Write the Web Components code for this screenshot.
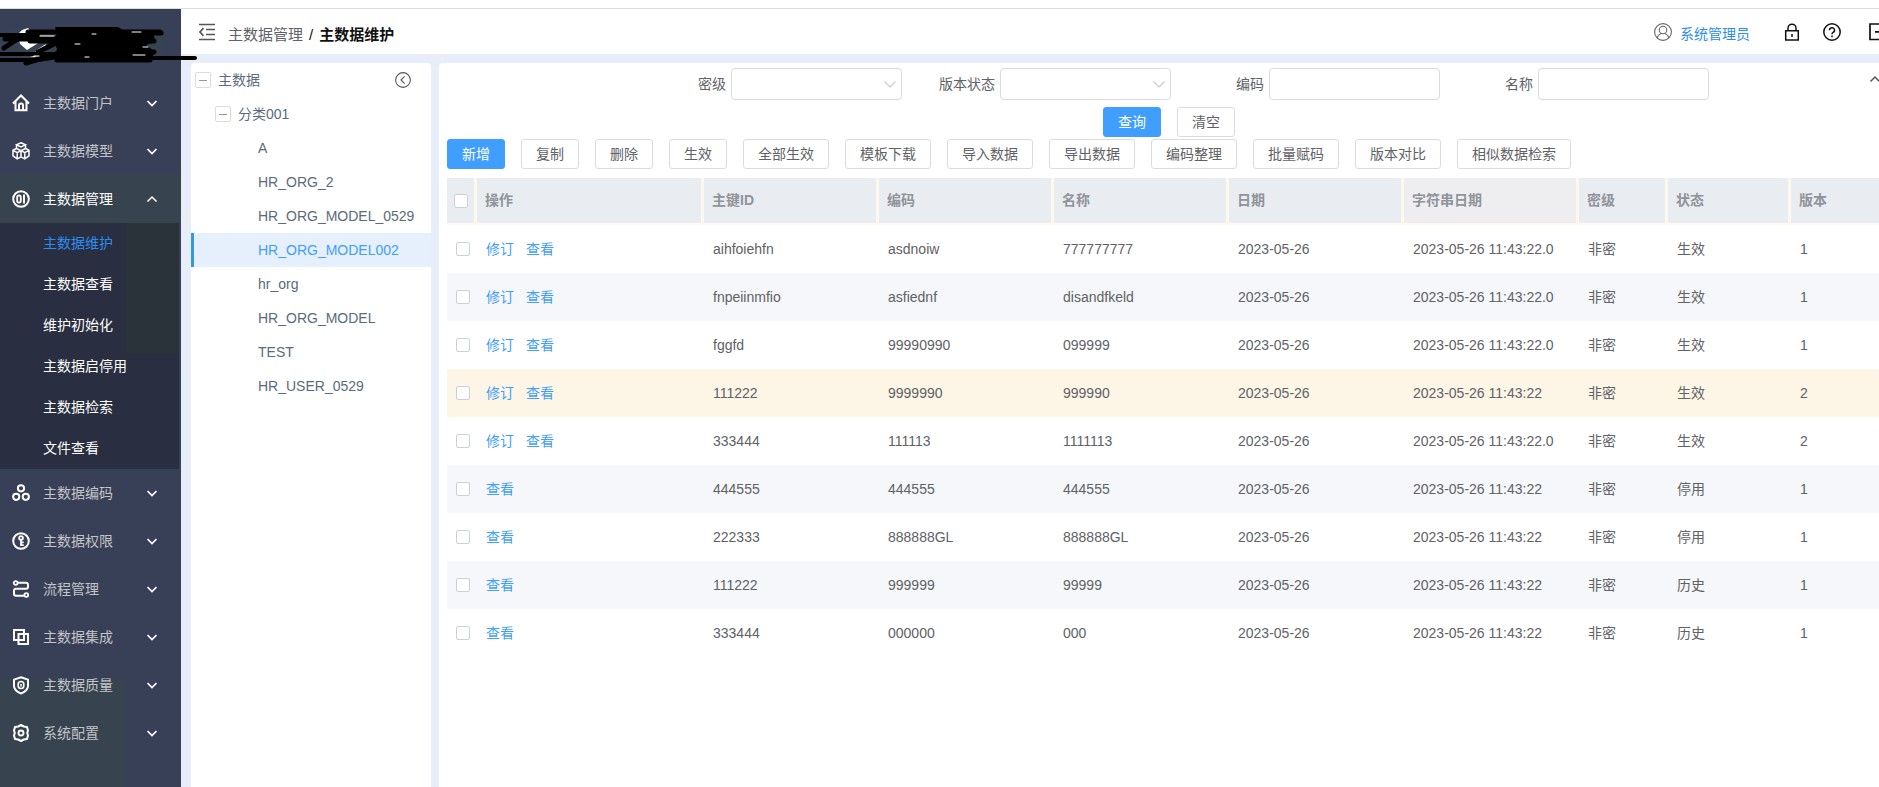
<!DOCTYPE html>
<html lang="zh-CN">
<head>
<meta charset="utf-8">
<title>主数据维护</title>
<style>
html{height:100%}
body{margin:0;min-height:100%;overflow:hidden;background:#fff;color:#606266;font:14px/20px "Liberation Sans","Noto Sans CJK SC",sans-serif}
</style>
</head>
<body>
<md-app>
  <md-sidebar slot="side"></md-sidebar>
  <md-topbar slot="top"></md-topbar>
  <md-tree slot="tree"></md-tree>
  <md-search-form slot="main"></md-search-form>
  <md-toolbar slot="main"></md-toolbar>
  <md-data-table slot="main"></md-data-table>
</md-app>
<script>
const define = (name, html, setup) => customElements.define(name, class extends HTMLElement {
  connectedCallback() {
    if (this.shadowRoot) return;
    const t = document.createElement('template');
    t.innerHTML = typeof html === 'function' ? html(this) : html;
    this.attachShadow({mode: 'open'}).append(t.content.cloneNode(true));
    if (setup) setup(this.shadowRoot, this);
  }
});

const ICONS = {
  home: '<path d="M1 9.500 9 1.500l8 8M3.500 7.500v8.700h11V7.500M7 16v-4.600a2 2 0 0 1 4 0V16" stroke-width="2"/>',
  cubes: '<path d="M9 .8 13.500 2.800 9 5 4.500 2.800ZM4.500 2.800v3.700L9 8.700l4.500-2.200V2.800M4.500 6.500 1 8.200v5.600l4.200 3 3.800-2V8.700M13.500 6.500 17 8.200v5.600l-4.200 3-3.800-2M1.200 8.400l4 2.200L9 8.700l3.800 1.900 4-2.200M5.200 10.600v6M12.800 10.600v6" stroke-width="1.500"/>',
  data: '<circle cx="9" cy="9" r="7.800" stroke-width="2"/><rect x="5.200" y="5.400" width="3.600" height="7.200" rx="1.800" stroke-width="1.800"/><path d="M12 4.500v9" stroke-width="2"/>',
  code: '<circle cx="9" cy="4.300" r="3.100"/><circle cx="4.200" cy="12.800" r="3.100"/><circle cx="13.800" cy="12.800" r="3.100"/>',
  key: '<circle cx="9" cy="9" r="7.800"/><circle cx="9" cy="6" r="1.900" stroke-width="1.800"/><path d="M9 8v6M9 10.300h2.700M9 13.200h2.700" stroke-width="1.800"/>',
  flow: '<circle cx="3.700" cy="3" r="1.900" stroke-width="1.800"/><path d="M5.500 2.700H14a2 2 0 0 1 2 2v2a2 2 0 0 1-2 2H4a2 2 0 0 0-2 2v3a2 2 0 0 0 2 2h8"/><circle cx="14.300" cy="15" r="1.900" stroke-width="1.800"/>',
  merge: '<rect x="2" y="2" width="10" height="10"/><rect x="6.500" y="6" width="9.500" height="10"/>',
  shield: '<path d="M9 1.200 16 3.600V10c0 3.600-3.500 6-7 7.500C5.500 16 2 13.600 2 10V3.600Z"/><rect x="6.200" y="5.500" width="5.600" height="7" rx="2.800" stroke-width="1.600"/><path d="M9 8v2.500" stroke-width="1.600"/>',
  gear: '<path d="M6.200 2.500 9 1l2.800 1.500L15 3l1 3.500-.8 2.500.8 2.500L15 15l-3.200.5L9 17l-2.800-1.500L3 15l-1-3.500L2.800 9 2 6.500 3 3Z" stroke-linejoin="round"/><circle cx="9" cy="9" r="2.500" stroke-width="1.900"/>',
  down: '<path d="m4.500 7 4.500 4.500L13.500 7" stroke-width="1.700"/>',
  chevron: '<path d="m3.500 6.500 5.500 5.500 5.500-5.500" stroke-width="1.200"/>',
  up: '<path d="m4.500 11.500 4.500-4.500 4.500 4.500" stroke-width="1.500"/>',
  fold: '<path d="M1 1.500h16M8 6.500h9M8 11.500h9M1 16.500h16M5.500 5.200 2 9l3.500 3.800" stroke-width="1.700"/>',
  back: '<circle cx="9" cy="9" r="8.300" stroke-width="1.200"/><path d="M10.800 5 6.800 9l4 4" stroke-width="1.200"/>',
  user: '<circle cx="9" cy="9" r="8.400" stroke-width="1.100"/><circle cx="9" cy="7" r="3.800" stroke-width="1.100"/><path d="M3 15c.7-2.700 2.200-3.900 4-4.600M15 15c-.7-2.700-2.200-3.900-4-4.600" stroke-width="1.100"/>',
  lock: '<path d="M2.700 7.700h12.600v9.200H2.700ZM5 7.500V5.200a4 4 0 0 1 8 0v2.300M9 11v3" stroke-width="1.500"/>',
  help: '<circle cx="9" cy="9" r="8.200" stroke-width="1.500"/><path d="M6.500 7.200a2.500 2.500 0 1 1 3.600 2.200c-.8.400-1.100.8-1.100 1.800M9 12.600v1.600" stroke-width="1.500"/>',
  exit: '<path d="M12 1H1v15.500h11M6 8.800h11M13.500 5.300 17 8.800l-3.500 3.500" stroke-width="1.700"/>'
};
define('md-icon', el => `<style>:host{display:block;width:18px;height:18px;flex:none}svg{display:block;width:100%;height:100%;overflow:visible}</style>
<svg viewBox="0 0 18 18" fill="none" stroke="currentColor" stroke-width="2" aria-hidden="true">${ICONS[el.getAttribute('name')]}</svg>`);

define('md-button', el => `<style>
:host{display:block}
button{display:block;box-sizing:border-box;height:30px;padding:0 14px;border:1px solid #dcdcdc;border-radius:3px;background:#fff;color:#606266;font:inherit;line-height:28px;white-space:nowrap;cursor:pointer}
:host([primary]) button{background:#409eff;border-color:#409eff;color:#fff}
</style><button type="button"><slot></slot></button>`);

define('md-app', `<style>
:host{display:grid;box-sizing:border-box;width:calc(100% + 24px);min-height:100vh;padding-top:8px;grid-template:auto 1fr / 181px 1fr}
.side{grid-row:1/3;border-top:1px solid #dcdcdc;display:grid}
.top{border-top:1px solid #dcdcdc}
.body{display:grid;grid-template-columns:240px 1fr;gap:8px;padding:9px 0 0 10px;background:#e7eefa}
.tree,main{background:#fff;border-radius:4px 4px 0 0}
main{min-width:0;padding:5px 0 0 8px}
</style>
<div class="side"><slot name="side"></slot></div>
<div class="top"><slot name="top"></slot></div>
<div class="body"><div class="tree"><slot name="tree"></slot></div><main><slot name="main"></slot></main></div>`);

const MENU = [['home','主数据门户'],['cubes','主数据模型'],['data','主数据管理',['主数据维护','主数据查看','维护初始化','主数据启停用','主数据检索','文件查看']],
  ['code','主数据编码'],['key','主数据权限'],['flow','流程管理'],['merge','主数据集成'],['shield','主数据质量'],['gear','系统配置']];
define('md-sidebar', `<style>
:host{display:block;color:#c3c4c8;background:linear-gradient(#37434f,#37434f) 0 100%/126px 107px no-repeat,#384057}
ul{list-style:none;margin:0;padding:0}
.item{display:flex;align-items:center;box-sizing:border-box;width:100%;height:48px;padding:0 20px 0 12px;border:0;background:none;color:inherit;font:inherit;text-align:left;cursor:pointer}
.item span{flex:1;padding-left:13px}
.item md-icon{color:#fff}
.item.open{background:#37434f;color:#fff}
.sub{margin-right:2px;background:linear-gradient(#2b333a,#2b333a) 100% 0/53px 131px no-repeat,#292e41}
.sub a{display:block;height:41px;padding-left:43px;line-height:41px;color:#fff;text-decoration:none}
.sub a[aria-current]{color:#2d8cf0}
</style>
<md-brand></md-brand>
<nav><ul>${MENU.map(([i,t,s]) => `<li><button type="button" class="item${s?' open':''}" aria-expanded="${!!s}"><md-icon name="${i}"></md-icon><span>${t}</span><md-icon name="${s?'up':'down'}"></md-icon></button>${s?`<ul class="sub">${s.map((x,n)=>`<li><a href="#"${n?'':' aria-current="page"'}>${x}</a></li>`).join('')}</ul>`:''}</li>`).join('')}</ul></nav>`);

define('md-brand', `<style>
:host{display:block;position:relative;height:70px}
svg{position:absolute;left:0;top:0;z-index:2}
</style>
<svg width="200" height="70" viewBox="0 9 200 70" fill="none" stroke="#000" stroke-linecap="round" stroke-linejoin="round" aria-hidden="true">
<path d="M10 31h152v27H10Z" fill="#37434f" stroke="none"/>
<path d="m18 34 4-4 6-2 12 14-13 8-7-6ZM30 56l8-7 8-5-2 9-10 4Z" fill="#fff" stroke="none"/>
<path d="M55 27h63l5 3h30l2 12-9 3 8 6-2 10-7 1H57l-2-6 2-7-4-9 4-6Z" fill="#000" stroke="none"/>
<path d="M-2 35h40M-2 54h60M-2 60h40l20-3M195 58H120" stroke-width="4"/>
<path d="M28 32h132M120 33h41M5 39h50M4 48 16 40M30 41h124M38 52l20-10M26 63l30-9M110 52h44M57 60h93" stroke-width="5"/>
<path d="M92 34h4M132 32h9M75 44h5M40 36h14M34 56h5M133 55h12M143 47h5M85 57h4" stroke="#fff" stroke-width="1"/>
</svg>`);

define('md-topbar', `<style>
:host{display:flex;align-items:center;height:45px;padding:0 16px 0 17px;background:#fff;box-sizing:border-box}
button{border:0;background:none;padding:0;color:#111;cursor:pointer}
.fold{color:#555}
nav{flex:1;margin-left:12px;padding-top:6px;font-size:15px}
nav a{color:#606266;text-decoration:none}
nav b,nav i{color:#111;font-style:normal}
nav i{margin:0 6px}
.user{display:flex;align-items:center;gap:8px;margin-right:33px;color:#666;text-decoration:none}
.user span{color:#2d8cf0;padding-top:4px}
.lock{margin-right:22px}.help{margin-right:28px}
</style>
<button type="button" class="fold" aria-label="收起菜单"><md-icon name="fold"></md-icon></button>
<nav><a href="#">主数据管理</a><i>/</i><b>主数据维护</b></nav>
<a class="user" href="#"><md-icon name="user"></md-icon><span>系统管理员</span></a>
<button type="button" class="lock" aria-label="锁屏"><md-icon name="lock"></md-icon></button>
<button type="button" class="help" aria-label="帮助"><md-icon name="help"></md-icon></button>
<button type="button" aria-label="退出"><md-icon name="exit"></md-icon></button>`);

const LEAVES = ['A','HR_ORG_2','HR_ORG_MODEL_0529','HR_ORG_MODEL002','hr_org','HR_ORG_MODEL','TEST','HR_USER_0529'];
define('md-tree', `<style>
:host{display:block;color:#5a6b7b}
ul{list-style:none;margin:0;padding:0}
.row{display:flex;align-items:center;box-sizing:border-box;height:34px;padding-left:4px}
.row.l2{padding-left:24px}
.row span{flex:1;padding-left:7px}
button{padding:0;border:0;background:none;color:#555;cursor:pointer}
.toggle{display:grid;place-items:center;box-sizing:border-box;width:16px;height:16px;border:1px solid #dcdcdc;border-radius:2px;background:#fff}
.toggle::before{content:"";width:8px;height:1px;background:#999}
.back{margin-right:20px}
.back md-icon{width:16px;height:16px}
a{display:block;box-sizing:border-box;height:34px;padding-left:67px;line-height:34px;color:inherit;text-decoration:none}
a[aria-current]{border-left:3px solid #3498db;padding-left:64px;background:#e6f0fd;color:#409eff}
</style>
<ul><li><div class="row"><button type="button" class="toggle" aria-label="折叠"></button><span>主数据</span><button type="button" class="back" aria-label="收起面板"><md-icon name="back"></md-icon></button></div>
<ul><li><div class="row l2"><button type="button" class="toggle" aria-label="折叠"></button><span>分类001</span></div>
<ul>${LEAVES.map(x=>`<li><a href="#"${x==='HR_ORG_MODEL002'?' aria-current="true"':''}>${x}</a></li>`).join('')}</ul></li></ul></li></ul>`);

define('md-field', el => { const l = el.getAttribute('label'); return `<style>
:host{display:flex;align-items:center;justify-content:flex-end;gap:5px;width:269px}
.box{position:relative;width:171px;height:32px}
input,select{display:block;box-sizing:border-box;width:100%;height:100%;margin:0;padding:0 12px;border:1px solid #dcdcdc;border-radius:4px;background:#fff;font:inherit;color:inherit;appearance:none}
md-icon{position:absolute;right:3px;top:7px;color:#c8cacf;pointer-events:none}
</style><label for="c">${l}</label><div class="box">${el.hasAttribute('select')?'<select id="c"><option></option></select><md-icon name="chevron"></md-icon>':'<input id="c" type="text">'}</div>`; });

define('md-search-form', `<style>
:host{display:grid;grid-template-columns:1fr auto 1fr;padding-right:8px}
.fields{grid-column:2;display:flex}
.fold{justify-self:end;align-self:start;margin:2px 11px 0 0;padding:0;border:0;background:none;color:#555;cursor:pointer}
.actions{grid-column:1/4;display:flex;justify-content:center;gap:16px;padding:7px 4px 0 0}
</style>
<div class="fields"><md-field select label="密级"></md-field><md-field select label="版本状态"></md-field><md-field label="编码"></md-field><md-field label="名称"></md-field></div>
<button type="button" class="fold" aria-label="收起查询"><md-icon name="up"></md-icon></button>
<div class="actions"><md-button primary>查询</md-button><md-button>清空</md-button></div>`);

define('md-toolbar', `<style>:host{display:flex;gap:16px;padding:2px 0 9px}</style>
${['新增','复制','删除','生效','全部生效','模板下载','导入数据','导出数据','编码整理','批量赋码','版本对比','相似数据检索'].map((x,i)=>`<md-button${i?'':' primary'}>${x}</md-button>`).join('')}`);

const D = '2023-05-26', T = D + ' 11:43:22';
const ROWS = [
 [1,'aihfoiehfn','asdnoiw','777777777',D,T+'.0','非密','生效',1],
 [1,'fnpeiinmfio','asfiednf','disandfkeld',D,T+'.0','非密','生效',1],
 [1,'fggfd','99990990','099999',D,T+'.0','非密','生效',1],
 [1,'111222','9999990','999990',D,T,'非密','生效',2],
 [1,'333444','111113','1111113',D,T+'.0','非密','生效',2],
 [0,'444555','444555','444555',D,T,'非密','停用',1],
 [0,'222333','888888GL','888888GL',D,T,'非密','停用',1],
 [0,'111222','999999','99999',D,T,'非密','历史',1],
 [0,'333444','000000','000',D,T,'非密','历史',1]];
define('md-data-table', `<style>
:host{display:block}
table{width:100%;table-layout:fixed;border-collapse:separate;border-spacing:0}
.c0{width:30px}.c1{width:227px}.c2{width:175px}.c3{width:89px}.c4{width:123px}
th,td{box-sizing:border-box;text-align:left;white-space:nowrap}
th{height:47px;padding:0 0 2px 8px;border-right:3px solid #fdf8ec;border-bottom:2px solid #fefaf2;background:#e9edf2;color:#909399}
th.g{background:#eeeef0}
td{height:48px;padding:0 0 0 9px}
th:first-child{padding:0 0 0 7px}
tbody tr:nth-child(even){background:#f5f7fa}
tbody tr.hl{background:#fdf5e6}
input{display:block;appearance:none;box-sizing:border-box;width:14px;height:14px;margin:0;border:1px solid #ccd0d9;border-radius:2px;background:#fff}
a{color:#409eff;text-decoration:none;margin-right:12px}
</style>
<table><colgroup><col class="c0"><col class="c1"><col class="c2"><col class="c2"><col class="c2"><col class="c2"><col class="c2"><col class="c3"><col class="c4"><col></colgroup>
<thead><tr><th><input type="checkbox" aria-label="全选"></th>${['操作','主键ID','编码','名称','日期','字符串日期','密级','状态','版本'].map(x=>`<th${x==='字符串日期'?' class="g"':''}>${x}</th>`).join('')}</tr></thead>
<tbody>${ROWS.map(([e,...c],i)=>`<tr${i===3?' class="hl"':''}><td><input type="checkbox" aria-label="选择第${i+1}行"></td><td>${e?'<a href="#">修订</a>':''}<a href="#">查看</a></td>${c.map(x=>`<td>${x}</td>`).join('')}</tr>`).join('')}</tbody></table>`);
</script>
</body>
</html>
